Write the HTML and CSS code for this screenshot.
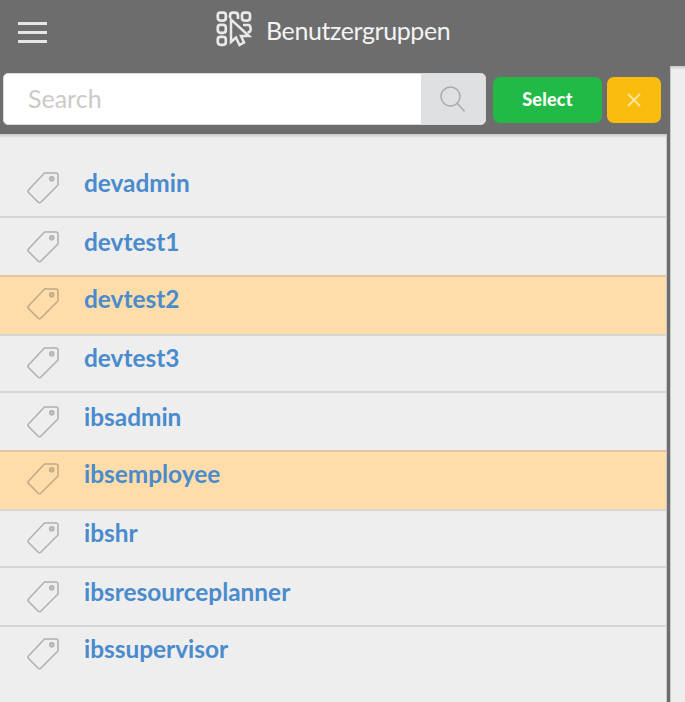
FILE: index.html
```html
<!DOCTYPE html>
<html lang="de">
<head>
<meta charset="utf-8">
<title>Benutzergruppen</title>
<link rel="stylesheet" href="styles.css">
</head>
<body>
<svg class="defs" aria-hidden="true">
  <symbol id="tag" viewBox="0 0 32 32"><path d="M17.500 1H29Q31 1 31 3V13L14 30Q12.500 31.500 11 30L1.500 20.500Q.5 19.500 1.500 18Z" fill="none" stroke="currentColor" stroke-width="1.500" stroke-linejoin="round"/><circle cx="24.700" cy="6.800" r="2.200" fill="currentColor" fill-opacity=".7" stroke="currentColor" stroke-width="1.200"/></symbol>
</svg>
<div class="app">
  <header class="title-bar">
    <div class="menu"><span></span><span></span><span></span></div>
    <svg class="group-icon" viewBox="0 0 36 36" fill="none" stroke="#e9e9e9" stroke-width="2.700">
      <rect x="1.800" y="1.600" width="8" height="8" rx="2.500"/>
      <rect x="1.800" y="13.800" width="8" height="8" rx="2.500"/>
      <rect x="1.800" y="25.800" width="8" height="8" rx="2.500"/>
      <path d="M14 7V4.500Q14 1.600 17 1.600H19Q22 1.600 22 4.500V8"/>
      <rect x="26" y="1.600" width="8" height="8" rx="2.500"/>
      <path d="M27 14H33Q35 15 34.500 19Q34 21.500 31.500 21.500"/>
      <path d="M15 8.500V31L20 26.500L23.500 34L28 31.500L25 25H33Z" stroke-width="2.500"/>
    </svg>
    <h1>Benutzergruppen</h1>
  </header>
  <div class="body">
    <main class="panel">
      <div class="toolbar">
        <div class="search">
          <div class="field">Search</div>
          <div class="search-button"><svg viewBox="0 0 26 27" fill="none" stroke="#a9aaab" stroke-width="1.500"><circle cx="10.500" cy="10.500" r="9.500"/><path d="M17.500 17.500L24.500 25.500"/></svg></div>
        </div>
        <button class="select">Select</button>
        <button class="close"><svg viewBox="0 0 14 14" fill="none" stroke="#fde3a0" stroke-width="1.900"><path d="M1 1L13 13M13 1L1 13"/></svg></button>
      </div>
      <ul class="list">
        <li><svg><use href="#tag"/></svg><span>devadmin</span></li>
        <li><svg><use href="#tag"/></svg><span>devtest1</span></li>
        <li class="selected"><svg><use href="#tag"/></svg><span>devtest2</span></li>
        <li><svg><use href="#tag"/></svg><span>devtest3</span></li>
        <li><svg><use href="#tag"/></svg><span>ibsadmin</span></li>
        <li class="selected"><svg><use href="#tag"/></svg><span>ibsemployee</span></li>
        <li><svg><use href="#tag"/></svg><span>ibshr</span></li>
        <li><svg><use href="#tag"/></svg><span>ibsresourceplanner</span></li>
        <li><svg><use href="#tag"/></svg><span>ibssupervisor</span></li>
      </ul>
    </main>
    <aside class="side"></aside>
  </div>
</div>
</body>
</html>
```
FILE: styles.css
```css
* { box-sizing: border-box; }
body { margin: 0; font-family: Lato, "Liberation Sans", sans-serif; background: #6d6d6d; }
.defs { display: block; width: 0; height: 0; }
.app { height: 702px; overflow: hidden; display: flex; flex-direction: column; }
.title-bar { height: 66px; flex: none; display: flex; align-items: flex-start; padding-left: 18px; color: #f3f3f3; }
.menu { width: 29px; margin: 22px 169px 0 0; display: grid; gap: 6px; }
.menu span { height: 3px; background: #e6e6e6; }
.group-icon { width: 36px; height: 36px; margin-top: 11px; flex: none; }
h1 { margin: 15px 0 0 14px; font-size: 25px; line-height: 30px; font-weight: 400; letter-spacing: -0.4px; }
.body { flex: 1; display: flex; gap: 3px; }
.panel { width: 667px; flex: none; display: flex; flex-direction: column; }
.toolbar { height: 68px; flex: none; display: flex; padding: 7px 0 0 3px; }
.search { width: 483px; height: 52px; display: flex; border: 1px solid #d9dadb; border-radius: 5px; overflow: hidden; background: #fff; }
.field { flex: 1; padding-left: 24px; font-size: 25px; line-height: 49px; color: #ccc9c6; }
.search-button { width: 64px; background: #dfe0e2; display: flex; align-items: center; justify-content: center; }
.search-button svg { width: 26px; height: 27px; }
button { border: 0; padding: 0; height: 46px; margin-top: 4px; border-radius: 7px; font-family: inherit; }
.select { width: 109px; margin-left: 7px; padding-bottom: 3px; background: #22ba46; color: #fff; font-size: 18px; font-weight: 900; letter-spacing: 0.2px; }
.close { width: 54px; margin-left: 5px; background: #fbbd0d; display: flex; align-items: center; justify-content: center; }
.close svg { width: 14px; height: 14px; }
.list { flex: 1; margin: 0; padding: 25px 0 0; list-style: none; background: linear-gradient(#c8c8c8, #eee 4px); border-right: 1px solid #c9c9c9; }
.list li { height: 59px; display: flex; align-items: flex-start; padding: 11px 0 0 27px; border-bottom: 2px solid #d5d5d5; color: #adb0b0; }
.list li:nth-child(3n+1) { height: 57px; }
.list li:first-child { height: 59px; }
.list li:first-child, .list li:nth-child(3n+2) { padding-top: 13px; }
.list li:last-child { border-bottom: 0; }
.list li.selected { background: #ffddab; color: #bfa982; }
.list li:nth-child(2), .list li:nth-child(5) { border-bottom-color: #e1c6a0; }
.list svg { width: 32px; height: 32px; margin-right: 25px; flex: none; }
.list span { margin-top: -4px; font-size: 24.400px; line-height: 30px; font-weight: 700; color: #498bcc; }
.side { flex: 1; background: linear-gradient(#c8c8c8, #eee 4px); border-left: 1px solid #c9c9c9; }
```
